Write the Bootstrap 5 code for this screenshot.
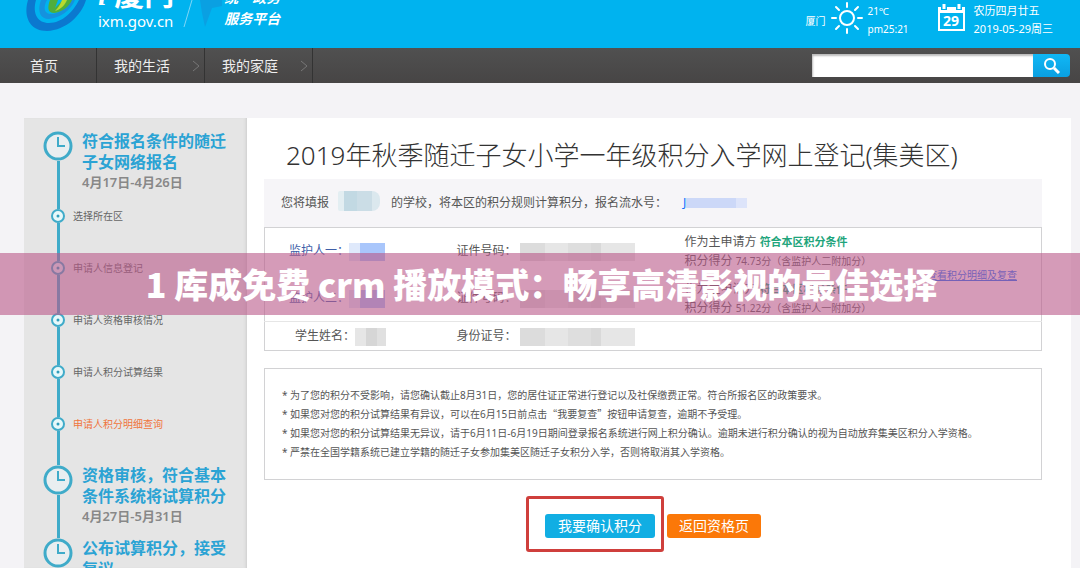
<!DOCTYPE html>
<html lang="zh-CN">
<head>
<meta charset="utf-8">
<meta name="viewport" content="width=device-width, initial-scale=1">
<title>i厦门 积分入学网上登记</title>
<link href="https://cdn.jsdelivr.net/npm/bootstrap@5.3.0/dist/css/bootstrap.min.css" rel="stylesheet">
<script src="https://cdn.jsdelivr.net/npm/bootstrap@5.3.0/dist/js/bootstrap.bundle.min.js" defer></script>
<style>
  body { font-family: "Noto Sans", "Noto Sans CJK SC", sans-serif; font-size: 12px; color: #555; background: #f4f3f6; }
  .site-head { height: 48px; background: #00b3ef; color: #fff; padding-left: 24px; padding-right: 27px; }
  .brand-name { font-size: 30px; line-height: 34px; font-weight: 700; height: 12px; }
  .brand-name i { font-family: "Liberation Serif", serif; }
  .brand-url { font-size: 15px; line-height: 18px; }
  .slogan { font-size: 14px; line-height: 16px; font-weight: 700; font-style: italic; margin-left: 2px; }
  .slogan-top { height: 6px; margin-bottom: 5px; }
  .txt-10 { font-size: 10px; line-height: 18px; }
  .txt-11 { font-size: 11px; line-height: 18px; }
  .weather { padding-top: 2px; }
  .main-nav { background: linear-gradient(#505050, #474545); height: 35px; padding-right: 10px; }
  .main-nav a { color: #eee; font-size: 14px; text-decoration: none; border-right: 1px solid #333; width: 108px; padding: 0 4px 0 17px; }
  .main-nav a:first-child { width: 97px; padding-left: 30px; }
  .search { width: 258px; height: 23px; }
  .search input { min-width: 0; border: 0; border-radius: 0; background: #fff; box-shadow: inset 1px 2px 2px #bbb; }
  .search button { width: 37px; border: 0; background: linear-gradient(#10b8f6, #0a9fe0); border-radius: 0 4px 4px 0; }
  .page { padding: 35px 9px 0 24px; }
  .side { width: 223px; background: #e5e5e5; padding: 13px 16px 0 19px; box-shadow: inset -3px 0 3px -2px #ccc; }
  .mark-col { width: 30px; }
  .mark-col svg { display: block; flex: none; }
  .rail { width: 3px; background: #3fabc9; }
  .stage { min-height: 73px; gap: 9px; }
  .stage:first-child { min-height: 78px; }
  .stage h2 { font-size: 16px; line-height: 21px; font-weight: 700; color: #2ba3d4; margin: 0; white-space: nowrap; }
  .stage p { font-size: 13px; line-height: 18px; font-weight: 600; color: #888; margin: 0; }
  .step { min-height: 52px; font-size: 10px; line-height: 14px; }
  .step.last { min-height: 48px; }
  .step a { color: #666; text-decoration: none; }
  .step.last a { color: #f0743c; }
  .sheet { background: #fff; padding: 13px 29px 0 17px; }
  .sheet h1 { font-size: 26px; line-height: 48px; font-weight: 300; color: #333; margin: 0; padding-left: 22px; }
  .summary { background: #f6f5f8; height: 48px; padding: 0 17px; }
  .records { border: 1px solid #d2d2d4; color: #555; margin: 0 0 17px; }
  .records td { padding: 0; height: 47px; vertical-align: middle; line-height: 19px; }
  .records td:first-child { padding-left: 24px; width: 192px; }
  .records .who { color: #3f5fa8; }
  .records .student td { height: 29px; border-top: 1px solid #e6e6e6; }
  .records .student td:first-child { padding-left: 30px; }
  .records .id-cell { width: 228px; }
  .ok { font-size: 11px; color: #1fa57c; }
  .blot { display: inline-block; vertical-align: middle; height: 18px; }
  .blot-name { width: 36px; background: linear-gradient(90deg, #dfe9fb 30%, #a9c6fb 30%); }
  .blot-id { width: 115px; margin-left: 3px; background: linear-gradient(90deg, #dcdcdc 22%, #e6e6e6 22% 42%, #dedede 42% 62%, #d9d9d9 62% 70%, #e6e6e6 70%); }
  .blot-kid { width: 31px; background: linear-gradient(90deg, #e6e6e6 35%, #d6d6d6 35% 70%, #e0e0e0 70%); }
  .blot-school { width: 42px; height: 20px; margin: 0 11px 4px 9px; background: linear-gradient(90deg, #e3eef2 14%, #c2d9e3 14% 45%, #cbdde6 45% 80%, #dbe8ee 80%); border-radius: 2px 8px 8px 2px; }
  .blot-serial { width: 61px; height: 10px; background: linear-gradient(90deg, #ccd8f8 82%, #dde4fa 82%); }
  .notes { border: 1px solid #d2d2d4; padding: 17px; font-size: 10px; line-height: 19px; }
  .cjk { font-family: "Noto Sans CJK SC", sans-serif; line-height: 1; }
  .actions { padding: 16px 0 0 262px; }
  .framed { border: 3px solid #cf3f3c; border-radius: 3px; padding: 15px 6px 11px 16px; margin-right: 3px; }
  .act { height: 24px; font-size: 14px; line-height: 24px; padding: 0 13px; border: 0; border-radius: 3px; color: #fff; background: #11aee3; }
  .act-back { background: #fb7808; padding: 0 12px; margin-top: 18px; }
  .banner { top: 253px; height: 62px; padding-left: 3px; background: rgba(185, 88, 137, .6); color: #fff; font: 900 34px/62px "Noto Sans CJK SC", sans-serif; white-space: nowrap; }
</style>
</head>
<body>
<div class="vh-100 overflow-hidden position-relative d-flex flex-column">
  <header class="site-head flex-shrink-0 overflow-hidden d-flex justify-content-between">
    <div class="d-flex">
      <svg width="66" height="34" viewBox="0 0 66 34" aria-hidden="true">
        <path d="M3 4C0 20 8 31 23 31 42 30 57 16 62 0h-7C49 12 38 23 25 23 14 23 8 14 12 0H4z" fill="#0b78cf"/>
        <path d="M17 0C13 11 16 19 25 19 36 18 47 10 51 0h-5C42 8 34 14 27 14 20 14 19 7 23 0z" fill="#1592de"/>
        <path d="M26 0c-3 8-2 13 4 13C38 12 45 7 48 0h-9l-8 8 3-8z" fill="#4fae3c"/>
        <path d="M31 11c6-2 10-6 12-11h-5c-2 5-4 8-7 11z" fill="#b9d92f"/>
      </svg>
      <div class="ms-2">
        <div class="brand-name d-flex align-items-end text-nowrap"><span><i>i</i> 厦门</span></div>
        <div class="brand-url">ixm.gov.cn</div>
      </div>
      <svg class="ms-1" width="44" height="34" viewBox="0 0 44 34" aria-hidden="true">
        <path d="M6 27L14 0" stroke="#7fd6f6" fill="none"/>
        <path d="M22 0h22v6L34 8l-7 19-3-14z" fill="#0aa0e2"/>
      </svg>
      <div class="slogan"><div class="slogan-top d-flex align-items-end text-nowrap"><span>统一政务</span></div><div>服务平台</div></div>
    </div>
    <div class="d-flex">
      <span class="txt-10 pt-2 mt-1">厦门</span>
      <svg class="mx-1" width="34" height="36" viewBox="0 0 34 36" fill="none" stroke="#fff" stroke-width="2" aria-hidden="true">
        <circle cx="17" cy="18" r="7"/>
        <path stroke-linecap="round" d="M17 3v4M17 29v4M2 18h4M28 18h4M6 7l3 3M25 26l3 3M28 7l-3 3M9 26l-3 3"/>
      </svg>
      <div class="txt-10 weather"><div>21℃</div><div>pm25:21</div></div>
      <svg class="ms-4 me-2" width="33" height="34" viewBox="0 0 33 34" aria-hidden="true">
        <path d="M6 9h25v21H6z" fill="none" stroke="#fff" stroke-width="2"/>
        <path d="M5 7h27v6H5z" fill="#fff"/>
        <path d="M11 4v6M26 4v6" stroke="#00b3ef" stroke-width="6"/><path d="M11 4v5M26 4v5" stroke="#fff" stroke-width="3"/>
        <text x="18" y="26" text-anchor="middle" font-size="14" font-weight="700" fill="#fff">29</text>
      </svg>
      <div class="txt-11 weather"><div>农历四月廿五</div><div>2019-05-29周三</div></div>
    </div>
  </header>

  <nav class="main-nav flex-shrink-0 d-flex align-items-center justify-content-between">
    <div class="d-flex h-100">
      <a href="#" class="d-flex align-items-center">首页</a>
      <a href="#" class="d-flex align-items-center justify-content-between">我的生活<svg width="8" height="12" fill="none" stroke="#777"><path d="M1 1l6 5-6 5"/></svg></a>
      <a href="#" class="d-flex align-items-center justify-content-between">我的家庭<svg width="8" height="12" fill="none" stroke="#777"><path d="M1 1l6 5-6 5"/></svg></a>
    </div>
    <form class="search d-flex">
      <input class="flex-fill" type="search" aria-label="搜索">
      <button type="button" class="p-0 d-flex align-items-center justify-content-center" aria-label="搜索">
        <svg width="16" height="16" fill="none" stroke="#fff" stroke-width="2"><circle cx="6" cy="6" r="5"/><path d="M10 10l5 5" stroke-width="3"/></svg>
      </button>
    </form>
  </nav>

  <svg width="0" height="0" class="position-absolute" aria-hidden="true">
    <symbol id="clock" viewBox="0 0 30 30"><circle cx="15" cy="15" r="13" fill="#e9eef0" stroke="#3fabc9" stroke-width="3"/><path d="M15 6v9h7" fill="none" stroke="#3fabc9" stroke-width="2"/></symbol>
    <symbol id="dot" viewBox="0 0 14 14"><circle cx="7" cy="7" r="6" fill="#e6f8fa" stroke="#3fabc9" stroke-width="2"/><circle cx="7" cy="7" r="1.5" fill="#2f9dbb"/></symbol>
  </svg>

  <div class="page flex-fill d-flex overflow-hidden">
    <aside class="side flex-shrink-0">
      <div class="stage d-flex">
        <div class="mark-col d-flex flex-column align-items-center"><svg width="30" height="30"><use href="#clock"/></svg><span class="rail flex-fill"></span></div>
        <div><h2>符合报名条件的随迁<br>子女网络报名</h2><p>4月17日-4月26日</p></div>
      </div>
      <div class="step d-flex"><div class="mark-col d-flex flex-column align-items-center"><svg width="14" height="14"><use href="#dot"/></svg><span class="rail flex-fill"></span></div><a href="#">选择所在区</a></div>
      <div class="step d-flex"><div class="mark-col d-flex flex-column align-items-center"><svg width="14" height="14"><use href="#dot"/></svg><span class="rail flex-fill"></span></div><a href="#">申请人信息登记</a></div>
      <div class="step d-flex"><div class="mark-col d-flex flex-column align-items-center"><svg width="14" height="14"><use href="#dot"/></svg><span class="rail flex-fill"></span></div><a href="#">申请人资格审核情况</a></div>
      <div class="step d-flex"><div class="mark-col d-flex flex-column align-items-center"><svg width="14" height="14"><use href="#dot"/></svg><span class="rail flex-fill"></span></div><a href="#">申请人积分试算结果</a></div>
      <div class="step last d-flex"><div class="mark-col d-flex flex-column align-items-center"><svg width="14" height="14"><use href="#dot"/></svg><span class="rail flex-fill"></span></div><a href="#">申请人积分明细查询</a></div>
      <div class="stage d-flex">
        <div class="mark-col d-flex flex-column align-items-center"><svg width="30" height="30"><use href="#clock"/></svg><span class="rail flex-fill"></span></div>
        <div><h2>资格审核，符合基本<br>条件系统将试算积分</h2><p>4月27日-5月31日</p></div>
      </div>
      <div class="stage d-flex">
        <div class="mark-col d-flex flex-column align-items-center"><svg width="30" height="30"><use href="#clock"/></svg><span class="rail flex-fill"></span></div>
        <div><h2>公布试算积分，接受<br>复议</h2></div>
      </div>
    </aside>

    <main class="sheet flex-fill">
      <h1>2019年秋季随迁子女小学一年级积分入学网上登记(集美区)</h1>
      <div class="summary d-flex align-items-center">
        <span>您将填报</span><span class="blot blot-school"></span><span>的学校，将本区的积分规则计算积分，报名流水号：</span><span class="ms-3 text-primary">J</span><span class="blot blot-serial"></span>
      </div>
      <table class="records w-100">
        <tbody>
          <tr>
            <td class="who">监护人一：<span class="blot blot-name"></span></td>
            <td class="id-cell">证件号码：<span class="blot blot-id"></span></td>
            <td><div>作为主申请方 <b class="ok">符合本区积分条件</b></div><div>积分得分 <span class="txt-10">74.73分（含监护人二附加分）</span></div></td>
            <td rowspan="2" class="text-end pe-4"><a href="#" class="txt-10">查看积分明细及复查</a></td>
          </tr>
          <tr>
            <td class="who">监护人二：<span class="blot blot-name"></span></td>
            <td class="id-cell">证件号码：<span class="blot blot-id"></span></td>
            <td><div>作为主申请方 <b class="ok">符合本区积分条件</b></div><div>积分得分 <span class="txt-10">51.22分（含监护人一附加分）</span></div></td>
          </tr>
          <tr class="student">
            <td>学生姓名：<span class="blot blot-kid"></span></td>
            <td class="id-cell">身份证号：<span class="blot blot-id"></span></td>
            <td colspan="2"></td>
          </tr>
        </tbody>
      </table>
      <div class="notes">
        <div>* 为了您的积分不受影响，请您确认截止8月31日，您的居住证正常进行登记以及社保缴费正常。符合所报名区的政策要求。</div>
        <div>* 如果您对您的积分试算结果有异议，可以在6月15日前点击<span class="cjk">“我要复查”</span>按钮申请复查，逾期不予受理。</div>
        <div>* 如果您对您的积分试算结果无异议，请于6月11日-6月19日期间登录报名系统进行网上积分确认。逾期未进行积分确认的视为自动放弃集美区积分入学资格。</div>
        <div>* 严禁在全国学籍系统已建立学籍的随迁子女参加集美区随迁子女积分入学，否则将取消其入学资格。</div>
      </div>
      <div class="actions d-flex align-items-start">
        <div class="framed d-flex"><button type="button" class="act">我要确认积分</button></div>
        <button type="button" class="act act-back">返回资格页</button>
      </div>
    </main>
  </div>

  <div class="banner position-absolute start-0 end-0 text-center">1 库成免费 crm 播放模式：畅享高清影视的最佳选择</div>
</div>
</body>
</html>
